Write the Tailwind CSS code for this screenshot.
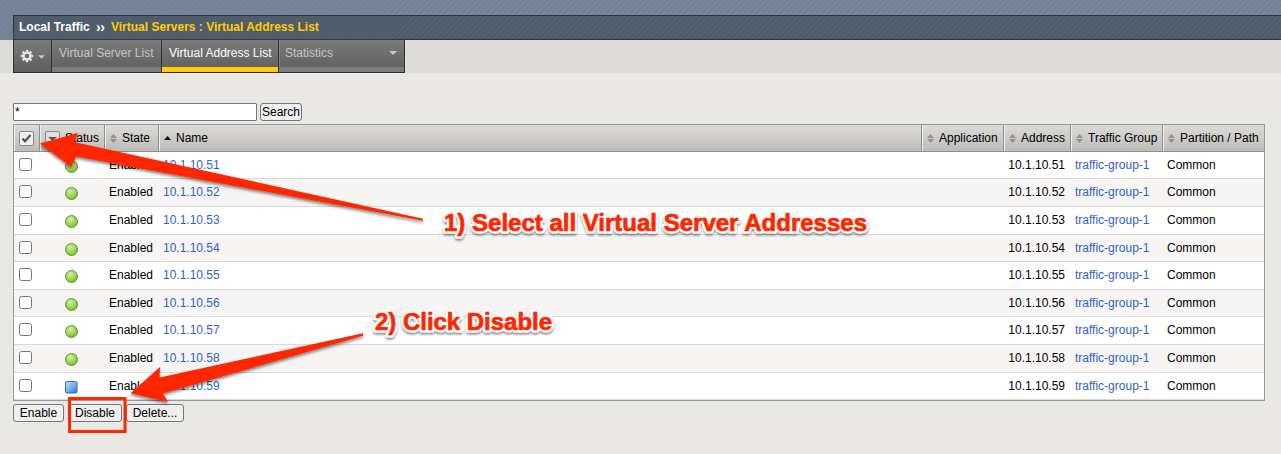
<!DOCTYPE html>
<html lang="en">
<head>
<meta charset="utf-8">
<title>Virtual Address List</title>
<script src="https://cdn.jsdelivr.net/npm/@tailwindcss/browser@4"></script>
</head>
<body class="relative h-[454px] w-[1281px] overflow-hidden bg-[#e9e8e4] font-['Liberation_Sans',Arial,sans-serif] text-[12px] leading-[14px] text-black">
<header class="flex h-[73px] flex-col">
  <div class="h-10 bg-[#738295] bg-[repeating-linear-gradient(135deg,transparent_0_3px,#7b899b_3px_4.24px)] pt-[15px] pl-[13px]">
    <div class="flex h-[25px] items-center gap-[5px] border-y border-l border-[#30363b] bg-[#505c69] bg-[repeating-linear-gradient(135deg,transparent_0_3px,#566270_3px_4.24px)] pb-px pl-[5px] font-bold text-white">
      <span class="w-[72px] whitespace-nowrap">Local Traffic</span><span class="w-[10px] text-[14px] tracking-[-0.3px]">››</span><span class="text-[#ffcc00]">Virtual Servers : Virtual Address List</span>
    </div>
  </div>
  <div class="flex h-[33px] bg-[linear-gradient(#dddcd8,#dddcd8)] bg-no-repeat pl-[13px]">
    <nav class="flex h-[33px] w-[392px] border-r border-b border-l border-[#30302f] bg-linear-to-b from-[#7b7b7b] to-[#5e5e5e] text-[#c4c4c4]">
      <div class="flex w-[38px] items-center gap-[5px] border-r border-[#30302f] pl-[6px]">
        <svg class="size-[14px]" viewBox="-7 -7 14 14"><g fill="#e4e4e4"><g id="t"><rect x="-1.2" y="-6.2" width="2.4" height="12.4"/><rect x="-6.2" y="-1.2" width="12.4" height="2.4"/></g><use href="#t" transform="rotate(45)"/></g><circle r="3.4" fill="none" stroke="#e4e4e4" stroke-width="2.2"/><circle r="2.2" fill="#6b6b6b"/></svg>
        <svg class="mt-[2px] -ml-px h-1 w-[7px]" viewBox="0 0 8 4"><path d="M0 0h8L4 4z" fill="#c8c8c8"/></svg>
      </div>
      <div class="w-[110px] border-r border-[#30302f] pt-[6px] pl-[7px] whitespace-nowrap shadow-[inset_0_-5px_#7b7b7b]">Virtual Server List</div>
      <div class="w-[117px] border-r border-[#30302f] pt-[6px] pl-[7px] whitespace-nowrap text-white shadow-[inset_0_-5px_#ffcc00]">Virtual Address List</div>
      <div class="flex grow justify-between pt-[6px] pr-[7px] pl-[6px] shadow-[inset_0_-5px_#7b7b7b,inset_1px_0_#858585]">Statistics<svg class="mt-[5px] h-1 w-2" viewBox="0 0 8 4"><path d="M0 0h8L4 4z" fill="#c8c8c8"/></svg></div>
    </nav>
  </div>
</header>
<main class="flex flex-col pt-[30px] pl-[13px]">
  <div class="flex h-[18px] gap-[3px]">
    <div class="w-[244px] rounded-[1px] border border-[#767676] bg-white pt-px pl-px">*</div>
    <div class="w-[42px] rounded-[3px] border border-[#767676] bg-[#efefef] pt-px text-center whitespace-nowrap">Search</div>
  </div>
  <section class="mt-[3px] w-[1252px] border border-[#999]">
    <div id="head" class="grid h-[27px] grid-cols-[26px_65px_54px_763px_82px_67px_92px_101px] border-b border-[#8f8f8e] bg-linear-to-b from-[#dcdbd8] to-[#bdbcb8]"></div>
    <div id="rows"></div>
  </section>
  <div class="mt-[3px] flex h-[18px] gap-[5px] leading-[16px]">
    <div class="w-[51px] rounded-[3px] border border-[#767676] bg-[#efefef] text-center">Enable</div>
    <div class="w-[53px] rounded-[3px] border border-[#767676] bg-[#efefef] pr-px text-center">Disable</div>
    <div class="-ml-px w-[58px] rounded-[3px] border border-[#767676] bg-[#efefef] text-center">Delete...</div>
  </div>
</main>
<svg class="absolute inset-0" width="1281" height="454" viewBox="0 0 1281 454">
  <defs>
    <filter id="sh" x="-10%" y="-20%" width="120%" height="150%"><feDropShadow dx="0" dy="2" stdDeviation="1.5" flood-opacity=".5"/></filter>
    <filter id="ts" x="-5%" y="-20%" width="110%" height="160%"><feDropShadow dx="0" dy="2" stdDeviation="1" flood-opacity=".45"/></filter>
  </defs>
  <g fill="#ff2600" filter="url(#sh)">
    <path d="M40 143.500L78 133L74 142L423 218.700V220.800L76 156.500L71 167Z"/>
    <path d="M130.500 393.300L160 367L159.500 377.500L363 333.300V335.700L163 393.500L168 402Z"/>
  </g>
  <rect x="69.500" y="398.500" width="55.500" height="33" fill="none" stroke="#ff2600" stroke-width="3"/>
  <g filter="url(#ts)" fill="#ff2600" stroke="#fff" stroke-width="5" stroke-linejoin="round" class="text-[24px] font-bold">
    <g id="notes">
      <text x="444" y="231" textLength="423" lengthAdjust="spacingAndGlyphs">1) Select all Virtual Server Addresses</text>
      <text x="375" y="330" textLength="177" lengthAdjust="spacingAndGlyphs">2) Click Disable</text>
    </g>
  </g>
  <use href="#notes" fill="#ff2600" stroke="#ff2600" stroke-width=".7" class="text-[24px] font-bold"/>
</svg>
<script>
const sort = '<svg class="mr-[5px] h-[9px] w-[7px] shrink-0" viewBox="0 0 7 9"><path d="M0 4L3.500 0L7 4zM0 5h7L3.500 9z" fill="#919191"/></svg>';
const asc = '<svg class="mr-[5px] h-1 w-[7px] shrink-0" viewBox="0 0 7 4"><path d="M0 4L3.500 0L7 4z" fill="#111"/></svg>';
const box = '<svg class="size-[15px] shrink-0" viewBox="0 0 15 15"><rect x=".5" y=".5" width="14" height="14" rx="1.500" fill="#efefef" stroke="#8b8b8b"/>';
const check = box + '<path d="M3.500 7.500L6 10.200L11.500 4" fill="none" stroke="#555" stroke-width="2.300"/></svg>';
const drop = box.replace('#efefef', '#dedede') + '<path d="M3 6h9L7.500 10z" fill="#555"/></svg>';
const heads = [check, drop + '<span class="ml-[5px]">Status</span>', sort + 'State', asc + 'Name', sort + 'Application', sort + 'Address', sort + 'Traffic Group', sort + 'Partition / Path'];
document.getElementById('head').innerHTML = heads.map((h, i) =>
  `<div class="flex items-center border-l border-[#efeeec] pl-[4px] whitespace-nowrap ${i < 7 ? 'shadow-[inset_-1px_0_#8f8f8e]' : ''}">${h}</div>`).join('');
const green = '<svg class="size-[13px]" viewBox="0 0 13 13"><defs><radialGradient id="g" cx=".4" cy=".32" r=".65"><stop stop-color="#d3efa2"/><stop offset="1" stop-color="#82c131"/></radialGradient></defs><circle cx="6.500" cy="6.500" r="6" fill="url(#g)" stroke="#5b9631"/></svg>';
const blue = '<svg class="size-[13px]" viewBox="0 0 13 13"><defs><linearGradient id="b" x2="1" y2="1"><stop stop-color="#d2e7fb"/><stop offset="1" stop-color="#1f7bd6"/></linearGradient></defs><rect x=".5" y=".5" width="11.500" height="11.500" rx="1.500" fill="url(#b)" stroke="#2d6cb5"/></svg>';
const heights = [27, 28, 28, 27, 28, 27, 28, 28, 27];
document.getElementById('rows').innerHTML = heights.map((h, i) =>
  `<div class="grid grid-cols-[26px_65px_54px_763px_82px_67px_92px_101px] border-b border-[#d9d9d9] ${i % 2 ? 'bg-[#f6f5f3]' : 'bg-white'} pt-[6px]" style="height:${h}px">
  <div class="pl-[5px]"><div class="size-[13px] rounded-[2.500px] border border-[#767676] bg-white"></div></div>
  <div class="pt-[2px] pl-[25px]">${i === 8 ? blue : green}</div>
  <div class="pl-[4px]">Enabled</div><div class="pl-[4px] text-[#2f62c9]">10.1.10.${51 + i}</div><div></div>
  <div class="pr-[6px] text-right">10.1.10.${51 + i}</div><div class="pl-[4px] text-[#2f62c9]">traffic-group-1</div><div class="pl-[4px]">Common</div></div>`).join('');
</script>
</body>
</html>
